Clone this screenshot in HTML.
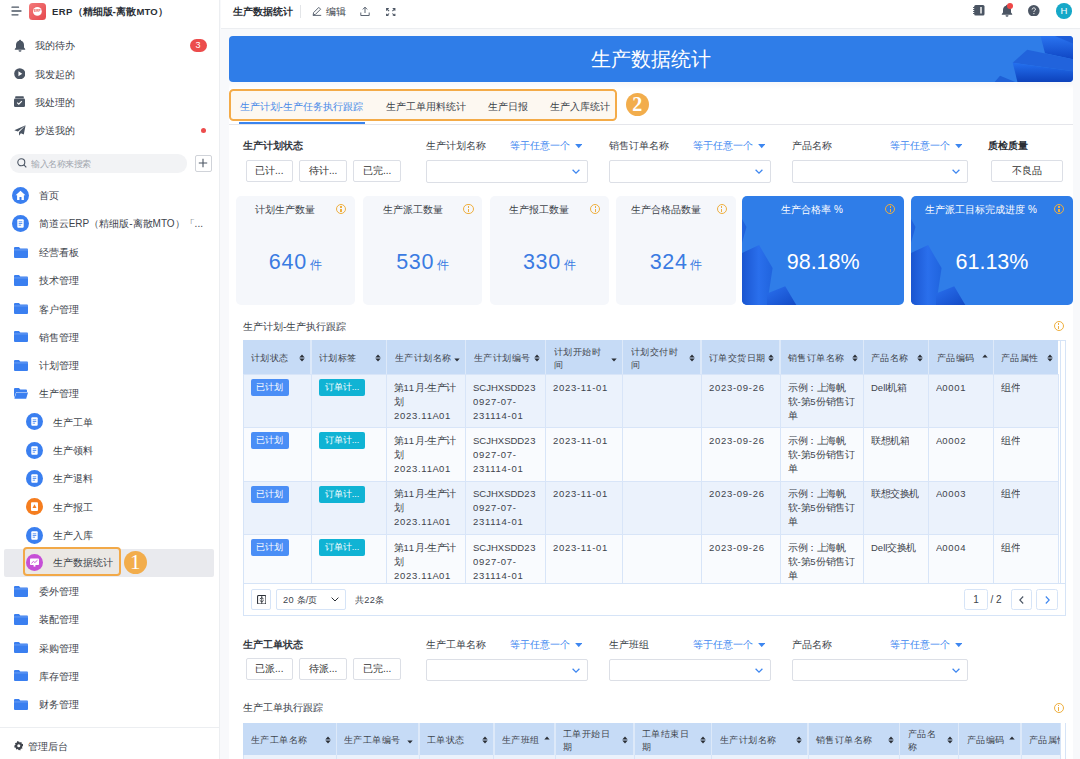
<!DOCTYPE html><html><head><meta charset="utf-8"><style>
*{box-sizing:border-box;margin:0;padding:0}
html,body{width:1080px;height:759px;overflow:hidden;background:#f8f9fb;font-family:"Liberation Sans",sans-serif;color:#333;font-size:10px;line-height:1}
.abs{position:absolute}
.t{position:absolute;white-space:nowrap;line-height:12px}
#sb{position:absolute;left:0;top:0;width:220px;height:759px;background:#fff;border-right:1px solid #eceef1}
.mi{position:absolute;left:0;width:220px;height:20px}
.mi .tx{position:absolute;left:35px;top:4px;font-size:10px;line-height:12px;color:#40444c;white-space:nowrap}
.fold{position:absolute;left:14px;top:5px;width:13.5px;height:11px}
.circ{position:absolute;width:17px;height:17px;border-radius:50%;background:#3a7ff0}
#top{position:absolute;left:221px;top:0;width:859px;height:28.5px;background:#fff;border-bottom:1px solid #eceef1}
.panel{position:absolute;background:#fff}
.btn{position:absolute;height:22px;border:1px solid #dcdfe6;border-radius:2px;background:#fff;font-size:10px;line-height:20px;color:#333;text-align:center}
.sel{position:absolute;height:22.5px;border:1px solid #dcdfe6;border-radius:2px;background:#fff}
.blue{color:#3d86f0}
.card{position:absolute;top:195.5px;height:109px;border-radius:5px;background:#f5f7fb}
.card .ct{position:absolute;top:205px;font-size:10px;line-height:10px;white-space:nowrap;color:#333}
table.tb{position:absolute;border-collapse:collapse;table-layout:fixed}
.tbx{background:#c6dbf6;font-weight:normal;text-align:left;color:#333;font-size:10px;line-height:14px;padding:0 0 0 8px;border-right:1.5px solid #e4edfa;position:relative;vertical-align:middle}
.tb td{font-size:10px;line-height:14.2px;color:#333;padding:5px 0 0 7.5px;vertical-align:top;border-right:1px solid #d8e5f8;border-top:1px solid #d8e5f8;white-space:nowrap;overflow:hidden}
.tb tr.o td{background:#ebf2fc}
.tb tr.e td{background:#f9fbfe}
.tag{display:inline-block;height:17px;line-height:17px;padding:0 4px;border-radius:2px;color:#fff;font-size:10px}
.srt{position:absolute;right:6px;top:50%;margin-top:-4px;width:6px;height:8px}
.info{position:absolute;width:10.5px;height:10.5px;border:1px solid #efaf3e;border-radius:50%}
.info:after{content:"";position:absolute;left:3.65px;top:3.9px;width:1.2px;height:3.6px;background:#efaf3e}
.info:before{content:"";position:absolute;left:3.65px;top:1.7px;width:1.2px;height:1.3px;background:#efaf3e}
</style></head><body>
<div id="sb">
<svg class="abs" style="left:11px;top:6px" width="11" height="10" viewBox="0 0 11 10"><g stroke="#4b5563" stroke-width="1.3" stroke-linecap="round"><line x1="1" y1="1.2" x2="7.5" y2="1.2"/><line x1="1" y1="5" x2="10" y2="5"/><line x1="1" y1="8.8" x2="7" y2="8.8"/></g></svg>
<div class="abs" style="left:29px;top:2.8px;width:17px;height:17px;border-radius:3.5px;background:linear-gradient(135deg,#f37a7a,#e5484d)"><svg class="abs" style="left:4.1px;top:4px" width="8.8" height="8.8" viewBox="0 0 8.8 8.8"><circle cx="4.4" cy="4.4" r="4.4" fill="#fff"/><text x="4.4" y="5.5" font-size="3.2" font-weight="bold" text-anchor="middle" fill="#e9575a" font-family="Liberation Sans">ERP</text></svg></div>
<div class="t" style="left:52px;top:5.8px;font-size:10px;font-weight:bold;color:#2b2f36"><span style="font-size:9.5px;letter-spacing:.35px">ERP</span>（精细版<span style="letter-spacing:.5px">-</span>离散<span style="font-size:9.5px;letter-spacing:.1px">MTO</span>）</div>
<svg class="abs" style="left:13.5px;top:38.8px" width="12" height="13" viewBox="0 0 12 13"><path d="M6 0.8c.6 0 1 .4 1 .9 1.9.5 3 2.1 3 4.2v2.6l1.2 1.4v.8H0.8v-.8L2 8.5V5.9c0-2.1 1.1-3.7 3-4.2 0-.5.4-.9 1-.9z" fill="#4b5563"/><path d="M4.5 11.3h3a1.5 1.5 0 0 1-3 0z" fill="#4b5563"/></svg>
<div class="t" style="left:35px;top:40.3px;color:#40444c">我的待办</div>
<div class="abs" style="left:189.5px;top:38.6px;width:17px;height:13.5px;border-radius:7px;background:#ec4c4c;color:#fff;font-size:9px;line-height:13.5px;text-align:center">3</div>
<svg class="abs" style="left:13.8px;top:67.7px" width="11.5" height="11.5" viewBox="0 0 12 12"><circle cx="6" cy="6" r="5.8" fill="#4b5563"/><path d="M4.6 3.4L8.6 6 4.6 8.6z" fill="#fff"/></svg>
<div class="t" style="left:35px;top:68.9px;color:#40444c">我发起的</div>
<svg class="abs" style="left:14px;top:96px" width="11" height="11" viewBox="0 0 11 11"><rect x="1.2" y="0.3" width="8.6" height="2" rx=".6" fill="#4b5563"/><rect x="0" y="2.6" width="11" height="8.4" rx="1.2" fill="#4b5563"/><path d="M3.2 6.6l1.6 1.5 3-3" stroke="#fff" stroke-width="1.2" fill="none"/></svg>
<div class="t" style="left:35px;top:96.9px;color:#40444c">我处理的</div>
<svg class="abs" style="left:13.5px;top:124.5px" width="12" height="11" viewBox="0 0 12 11"><path d="M11.6 0.2L0.3 5.2l3.6 1.3L11.6 0.2 5 7.3v3.5l1.9-2.6 2.9 1.3z" fill="#4b5563"/></svg>
<div class="t" style="left:35px;top:125.4px;color:#40444c">抄送我的</div>
<div class="abs" style="left:200.6px;top:127.8px;width:5.6px;height:5.6px;border-radius:50%;background:#ec4c4c"></div>
<div class="abs" style="left:9.8px;top:154.3px;width:177.5px;height:18.3px;border-radius:9px;background:#f2f3f5"></div>
<svg class="abs" style="left:17.3px;top:158.3px" width="10" height="10" viewBox="0 0 10 10"><circle cx="4.3" cy="4.3" r="3.5" stroke="#4b5563" stroke-width="1.1" fill="none"/><line x1="6.9" y1="6.9" x2="9.3" y2="9.3" stroke="#4b5563" stroke-width="1.1"/></svg>
<div class="t" style="left:30.5px;top:157.5px;font-size:9px;color:#a3a8b0;transform:scale(.945);transform-origin:0 50%">输入名称来搜索</div>
<div class="abs" style="left:194.5px;top:155px;width:17px;height:16.7px;border:1px solid #d0d3d9;border-radius:2px;background:#fff"></div>
<svg class="abs" style="left:198px;top:158.3px" width="10" height="10" viewBox="0 0 10 10"><path d="M5 0.8v8.4M0.8 5h8.4" stroke="#4b5563" stroke-width="1.1"/></svg>
<svg class="abs" style="left:12.2px;top:186.5px" width="17" height="17" viewBox="0 0 17 17"><circle cx="8.5" cy="8.5" r="8.5" fill="#3a7ff0"/><path d="M8.5 3.8L3.6 8.3h1.5v4.6h2.4V10h2v2.9h2.4V8.3h1.5z" fill="#fff"/></svg>
<div class="t" style="left:38.7px;top:189.9px;color:#40444c;">首页</div>
<svg class="abs" style="left:12.2px;top:215.0px" width="17" height="17" viewBox="0 0 17 17"><circle cx="8.5" cy="8.5" r="8.5" fill="#3a7ff0"/><rect x="5.3" y="4.3" width="6.4" height="8.4" rx="1" fill="#fff"/><path d="M6.7 6.8h3.6M6.7 8.5h3.6M6.7 10.2h2.4" stroke="#3a7ff0" stroke-width=".8"/></svg>
<div class="t" style="left:38.7px;top:218.4px;color:#40444c;">简道云ERP（精细版-离散MTO）「...</div>
<svg class="abs" style="left:13.9px;top:246.5px" width="14" height="11" viewBox="0 0 14 11"><path d="M0 1a1 1 0 0 1 1-1h4l1.3 1.5H13a1 1 0 0 1 1 1V10a1 1 0 0 1-1 1H1a1 1 0 0 1-1-1z" fill="#3a7ff0"/><rect x="0" y="2.6" width="14" height=".7" fill="#fff" opacity=".35"/></svg>
<div class="t" style="left:38.7px;top:246.9px;color:#40444c;">经营看板</div>
<svg class="abs" style="left:13.9px;top:274.8px" width="14" height="11" viewBox="0 0 14 11"><path d="M0 1a1 1 0 0 1 1-1h4l1.3 1.5H13a1 1 0 0 1 1 1V10a1 1 0 0 1-1 1H1a1 1 0 0 1-1-1z" fill="#3a7ff0"/><rect x="0" y="2.6" width="14" height=".7" fill="#fff" opacity=".35"/></svg>
<div class="t" style="left:38.7px;top:275.2px;color:#40444c;">技术管理</div>
<svg class="abs" style="left:13.9px;top:303.1px" width="14" height="11" viewBox="0 0 14 11"><path d="M0 1a1 1 0 0 1 1-1h4l1.3 1.5H13a1 1 0 0 1 1 1V10a1 1 0 0 1-1 1H1a1 1 0 0 1-1-1z" fill="#3a7ff0"/><rect x="0" y="2.6" width="14" height=".7" fill="#fff" opacity=".35"/></svg>
<div class="t" style="left:38.7px;top:303.5px;color:#40444c;">客户管理</div>
<svg class="abs" style="left:13.9px;top:331.4px" width="14" height="11" viewBox="0 0 14 11"><path d="M0 1a1 1 0 0 1 1-1h4l1.3 1.5H13a1 1 0 0 1 1 1V10a1 1 0 0 1-1 1H1a1 1 0 0 1-1-1z" fill="#3a7ff0"/><rect x="0" y="2.6" width="14" height=".7" fill="#fff" opacity=".35"/></svg>
<div class="t" style="left:38.7px;top:331.79999999999995px;color:#40444c;">销售管理</div>
<svg class="abs" style="left:13.9px;top:359.7px" width="14" height="11" viewBox="0 0 14 11"><path d="M0 1a1 1 0 0 1 1-1h4l1.3 1.5H13a1 1 0 0 1 1 1V10a1 1 0 0 1-1 1H1a1 1 0 0 1-1-1z" fill="#3a7ff0"/><rect x="0" y="2.6" width="14" height=".7" fill="#fff" opacity=".35"/></svg>
<div class="t" style="left:38.7px;top:360.09999999999997px;color:#40444c;">计划管理</div>
<svg class="abs" style="left:13.9px;top:388.0px" width="14" height="11" viewBox="0 0 14 11"><path d="M0 1a1 1 0 0 1 1-1h4l1.3 1.5H12a1 1 0 0 1 1 1V4H2.2L0 10z" fill="#3a7ff0"/><path d="M2.3 4.6H14l-1.8 6.2H0.4z" fill="#3a7ff0"/></svg>
<div class="t" style="left:38.7px;top:388.4px;color:#40444c;">生产管理</div>
<div class="abs" style="left:3.7px;top:548.9px;width:210.8px;height:27.8px;border-radius:2px;background:#e9eaee"></div>
<svg class="abs" style="left:26.1px;top:413.3px" width="17" height="17" viewBox="0 0 17 17"><circle cx="8.5" cy="8.5" r="8.5" fill="#3a7ff0"/><rect x="5.3" y="4.3" width="6.4" height="8.4" rx="1" fill="#fff"/><path d="M6.7 6.8h3.6M6.7 8.5h3.6M6.7 10.2h2.4" stroke="#3a7ff0" stroke-width=".8"/></svg>
<div class="t" style="left:52.6px;top:416.7px;color:#40444c;">生产工单</div>
<svg class="abs" style="left:26.1px;top:441.6px" width="17" height="17" viewBox="0 0 17 17"><circle cx="8.5" cy="8.5" r="8.5" fill="#3a7ff0"/><rect x="5.3" y="4.3" width="6.4" height="8.4" rx="1" fill="#fff"/><path d="M6.7 6.8h3.6M6.7 8.5h3.6M6.7 10.2h2.4" stroke="#3a7ff0" stroke-width=".8"/></svg>
<div class="t" style="left:52.6px;top:445.0px;color:#40444c;">生产领料</div>
<svg class="abs" style="left:26.1px;top:469.9px" width="17" height="17" viewBox="0 0 17 17"><circle cx="8.5" cy="8.5" r="8.5" fill="#3a7ff0"/><rect x="5.3" y="4.3" width="6.4" height="8.4" rx="1" fill="#fff"/><path d="M6.7 6.8h3.6M6.7 8.5h3.6M6.7 10.2h2.4" stroke="#3a7ff0" stroke-width=".8"/></svg>
<div class="t" style="left:52.6px;top:473.29999999999995px;color:#40444c;">生产退料</div>
<svg class="abs" style="left:26.1px;top:498.2px" width="17" height="17" viewBox="0 0 17 17"><circle cx="8.5" cy="8.5" r="8.5" fill="#f57d1f"/><rect x="5" y="4.3" width="7" height="8.6" rx="1" fill="#fff"/><path d="M8.5 6.3l2 3.7h-4z" fill="#f57d1f"/></svg>
<div class="t" style="left:52.6px;top:501.59999999999997px;color:#40444c;">生产报工</div>
<svg class="abs" style="left:26.1px;top:526.5px" width="17" height="17" viewBox="0 0 17 17"><circle cx="8.5" cy="8.5" r="8.5" fill="#3a7ff0"/><rect x="5.3" y="4.3" width="6.4" height="8.4" rx="1" fill="#fff"/><path d="M6.7 6.8h3.6M6.7 8.5h3.6M6.7 10.2h2.4" stroke="#3a7ff0" stroke-width=".8"/></svg>
<div class="t" style="left:52.6px;top:529.9px;color:#40444c;">生产入库</div>
<div class="abs" style="left:23px;top:546.7px;width:97.7px;height:29px;border:2px solid #f2a948;border-radius:4px;background:#ebe8e4"></div>
<svg class="abs" style="left:26.3px;top:553.5px" width="17" height="17" viewBox="0 0 17 17"><circle cx="8.5" cy="8.5" r="8.5" fill="#c64fd6"/><rect x="4" y="4.6" width="9" height="6.4" rx=".8" fill="#fff"/><path d="M5.4 9.3l2-1.8 1.5 1 2.6-2.3" stroke="#c64fd6" stroke-width=".9" fill="none"/><rect x="7.6" y="11" width="1.8" height="1.6" fill="#fff"/></svg>
<div class="t" style="left:52.6px;top:557.1px;color:#40444c;">生产数据统计</div>
<div class="abs" style="left:123.7px;top:551px;width:23px;height:23px;border-radius:50%;background:#f2ad4c;color:#fff;font-family:'Liberation Serif',serif;font-size:21px;line-height:23px;text-align:center">1</div>
<svg class="abs" style="left:13.9px;top:585.5px" width="14" height="11" viewBox="0 0 14 11"><path d="M0 1a1 1 0 0 1 1-1h4l1.3 1.5H13a1 1 0 0 1 1 1V10a1 1 0 0 1-1 1H1a1 1 0 0 1-1-1z" fill="#3a7ff0"/><rect x="0" y="2.6" width="14" height=".7" fill="#fff" opacity=".35"/></svg>
<div class="t" style="left:38.7px;top:585.9px;color:#40444c;">委外管理</div>
<svg class="abs" style="left:13.9px;top:613.8px" width="14" height="11" viewBox="0 0 14 11"><path d="M0 1a1 1 0 0 1 1-1h4l1.3 1.5H13a1 1 0 0 1 1 1V10a1 1 0 0 1-1 1H1a1 1 0 0 1-1-1z" fill="#3a7ff0"/><rect x="0" y="2.6" width="14" height=".7" fill="#fff" opacity=".35"/></svg>
<div class="t" style="left:38.7px;top:614.1999999999999px;color:#40444c;">装配管理</div>
<svg class="abs" style="left:13.9px;top:642.1px" width="14" height="11" viewBox="0 0 14 11"><path d="M0 1a1 1 0 0 1 1-1h4l1.3 1.5H13a1 1 0 0 1 1 1V10a1 1 0 0 1-1 1H1a1 1 0 0 1-1-1z" fill="#3a7ff0"/><rect x="0" y="2.6" width="14" height=".7" fill="#fff" opacity=".35"/></svg>
<div class="t" style="left:38.7px;top:642.5px;color:#40444c;">采购管理</div>
<svg class="abs" style="left:13.9px;top:670.4px" width="14" height="11" viewBox="0 0 14 11"><path d="M0 1a1 1 0 0 1 1-1h4l1.3 1.5H13a1 1 0 0 1 1 1V10a1 1 0 0 1-1 1H1a1 1 0 0 1-1-1z" fill="#3a7ff0"/><rect x="0" y="2.6" width="14" height=".7" fill="#fff" opacity=".35"/></svg>
<div class="t" style="left:38.7px;top:670.8px;color:#40444c;">库存管理</div>
<svg class="abs" style="left:13.9px;top:698.7px" width="14" height="11" viewBox="0 0 14 11"><path d="M0 1a1 1 0 0 1 1-1h4l1.3 1.5H13a1 1 0 0 1 1 1V10a1 1 0 0 1-1 1H1a1 1 0 0 1-1-1z" fill="#3a7ff0"/><rect x="0" y="2.6" width="14" height=".7" fill="#fff" opacity=".35"/></svg>
<div class="t" style="left:38.7px;top:699.1px;color:#40444c;">财务管理</div>
<div class="abs" style="left:0;top:727px;width:220px;height:1px;background:#eceef1"></div>
<svg class="abs" style="left:13.5px;top:741px" width="9.5" height="9.5" viewBox="0 0 10 10"><path d="M5 0l1 1.6 1.8-.5.3 1.8 1.8.5-.6 1.7L10 5l-1.6 1 .5 1.8-1.8.3-.5 1.8-1.7-.6L5 10 4 8.4l-1.8.5-.3-1.8-1.8-.5.6-1.7L0 5l1.6-1-.5-1.8 1.8-.3.5-1.8 1.7.6z" fill="#40444c"/><circle cx="5" cy="5" r="1.6" fill="#fff"/></svg>
<div class="t" style="left:27.5px;top:740.9px;color:#40444c;">管理后台</div>
</div>
<div id="top"></div>
<div class="t" style="left:233px;top:5.5px;font-weight:bold;color:#2b2f36">生产数据统计</div>
<div class="abs" style="left:299.5px;top:5px;width:1px;height:12.5px;background:#e3e5e8"></div>
<svg class="abs" style="left:311.5px;top:6px" width="10" height="10" viewBox="0 0 10 10"><path d="M1.2 8.8l.4-2.2L6.8 1.4l1.8 1.8-5.2 5.2z M0.8 9.4h8.4" stroke="#4b5563" stroke-width=".9" fill="none"/></svg>
<div class="t" style="left:325.8px;top:5.5px;color:#40444c">编辑</div>
<svg class="abs" style="left:360px;top:5.5px" width="10" height="10.5" viewBox="0 0 10 10.5"><path d="M5 7V1.2M2.8 3.4L5 1.2l2.2 2.2M0.8 6.5v3h8.4v-3" stroke="#4b5563" stroke-width=".9" fill="none"/></svg>
<svg class="abs" style="left:386px;top:7.6px" width="9.5" height="8.6" viewBox="0 0 9.5 8.6"><path d="M0.6 2.8V0.6h2.2M0.6 0.6l2.5 2.5M6.7 0.6h2.2v2.2M8.9 0.6L6.4 3.1M8.9 5.8V8h-2.2M8.9 8L6.4 5.5M2.8 8H0.6V5.8M0.6 8l2.5-2.5" stroke="#4b5563" stroke-width="1.05" fill="none"/></svg>
<svg class="abs" style="left:973px;top:5px" width="11.5" height="10.5" viewBox="0 0 11.5 10.5"><rect x="1.2" y="0" width="10.3" height="10.5" rx="1.5" fill="#4b5563"/><rect x="7.3" y="2" width="1.4" height="6.5" fill="#fff"/><path d="M0 2.5h2M0 4.5h2M0 6.5h2M0 8.5h2" stroke="#4b5563" stroke-width=".9"/></svg>
<svg class="abs" style="left:1000.5px;top:4.199999999999999px" width="12" height="13" viewBox="0 0 12 13"><path d="M6 0.8c.6 0 1 .4 1 .9 1.9.5 3 2.1 3 4.2v2.6l1.2 1.4v.8H0.8v-.8L2 8.5V5.9c0-2.1 1.1-3.7 3-4.2 0-.5.4-.9 1-.9z" fill="#4b5563"/><path d="M4.5 11.3h3a1.5 1.5 0 0 1-3 0z" fill="#4b5563"/></svg>
<div class="abs" style="left:1007.4px;top:2.7px;width:6px;height:6px;border-radius:50%;background:#ef4646"></div>
<svg class="abs" style="left:1028.2px;top:4.7px" width="11.6" height="11.6" viewBox="0 0 12 12"><circle cx="6" cy="6" r="6" fill="#4b5563"/><path d="M4.3 4.6c0-1 .8-1.6 1.7-1.6s1.7.6 1.7 1.5c0 1.2-1.6 1.2-1.6 2.6" stroke="#fff" stroke-width="1" fill="none"/><circle cx="6.1" cy="8.9" r=".65" fill="#fff"/></svg>
<div class="abs" style="left:1056px;top:3.1px;width:15.7px;height:15.7px;border-radius:50%;background:#16a8c8;color:#fff;font-size:9.5px;line-height:15.7px;text-align:center">H</div>
<div class="abs" style="left:228.5px;top:36px;width:844.7px;height:46.3px;border-radius:4px;background:#2f7de8;overflow:hidden"><svg class="abs" style="left:0;top:0" width="845" height="47" viewBox="0 0 845 47"><defs><linearGradient id="bg1" x1="0" y1="0" x2="0" y2="1"><stop offset="0" stop-color="#2a74f0"/><stop offset="1" stop-color="#0f46c4"/></linearGradient><linearGradient id="bg2" x1="0" y1="0" x2="0" y2="1"><stop offset="0" stop-color="#2470f0"/><stop offset="1" stop-color="#0c3fb8"/></linearGradient></defs><path d="M811.5 0H845V23.4L816 17.3z" fill="url(#bg1)"/><path d="M826 0H845V8z" fill="#1a58d2" opacity=".8"/><path d="M783.7 26.8L798.2 13.8 845 23.4V35.5z" fill="#2163dc"/><path d="M783.7 26.8L845 35.5V47H788.7z" fill="url(#bg2)"/><path d="M764.8 47L771 39.8 788.7 47z" fill="#1f60d6"/></svg><div class="t" style="left:0;width:844px;text-align:center;top:11px;font-size:19.6px;line-height:24px;color:#fff">生产数据统计</div></div>
<div class="panel" style="left:228.5px;top:83px;width:844.7px;height:42px;background:linear-gradient(#f8f8fa,#fff 6px)"></div>
<div class="abs" style="left:228.5px;top:124px;width:844.7px;height:1px;background:#e5e6eb"></div>
<div class="abs" style="left:229px;top:88.5px;width:387.6px;height:32.4px;border:2px solid #f4ab48;border-radius:4.5px;background:#fdf8f1"></div>
<div class="t" style="left:239.5px;top:101px;color:#4a8ae8">生产计划-生产任务执行跟踪</div>
<div class="t" style="left:386.4px;top:101px;color:#40444c">生产工单用料统计</div>
<div class="t" style="left:488.3px;top:101px;color:#40444c">生产日报</div>
<div class="t" style="left:550.2px;top:101px;color:#40444c">生产入库统计</div>
<div class="abs" style="left:239.3px;top:122px;width:125.6px;height:2px;background:#3a84ee"></div>
<div class="abs" style="left:625.6px;top:92.6px;width:23.3px;height:23.3px;border-radius:50%;background:#f2ad4c;color:#fff;font-family:'Liberation Serif',serif;font-weight:bold;font-size:20px;line-height:23.3px;text-align:center">2</div>
<div class="panel" style="left:228.5px;top:125px;width:844.7px;height:640px"></div>
<div class="t" style="left:243px;top:140px;font-weight:bold;color:#33373e">生产计划状态</div>
<div class="btn" style="left:245.5px;top:159.7px;width:47.5px">已计...</div>
<div class="btn" style="left:299.3px;top:159.7px;width:47.5px">待计...</div>
<div class="btn" style="left:353.3px;top:159.7px;width:47.5px">已完...</div>
<div class="t" style="left:426px;top:140px;color:#40444c">生产计划名称</div>
<div class="t blue" style="left:509.8px;top:140px">等于任意一个</div>
<svg class="abs" style="left:574.8px;top:144px" width="7.5" height="4.5" viewBox="0 0 8 5"><path d="M0 0h8L4 4.6z" fill="#3d86f0"/></svg>
<div class="sel" style="left:426px;top:160.2px;width:161.6px"></div>
<svg class="abs" style="left:571.6px;top:169px" width="8" height="5" viewBox="0 0 8 5"><path d="M0.6 0.7L4 4.1l3.4-3.4" stroke="#3d86f0" stroke-width="1.25" fill="none"/></svg>
<div class="t" style="left:609px;top:140px;color:#40444c">销售订单名称</div>
<div class="t blue" style="left:692.6px;top:140px">等于任意一个</div>
<svg class="abs" style="left:757.6px;top:144px" width="7.5" height="4.5" viewBox="0 0 8 5"><path d="M0 0h8L4 4.6z" fill="#3d86f0"/></svg>
<div class="sel" style="left:609px;top:160.2px;width:161.6px"></div>
<svg class="abs" style="left:754.6px;top:169px" width="8" height="5" viewBox="0 0 8 5"><path d="M0.6 0.7L4 4.1l3.4-3.4" stroke="#3d86f0" stroke-width="1.25" fill="none"/></svg>
<div class="t" style="left:792px;top:140px;color:#40444c">产品名称</div>
<div class="t blue" style="left:889.6px;top:140px">等于任意一个</div>
<svg class="abs" style="left:954.6px;top:144px" width="7.5" height="4.5" viewBox="0 0 8 5"><path d="M0 0h8L4 4.6z" fill="#3d86f0"/></svg>
<div class="sel" style="left:792px;top:160.2px;width:176.2px"></div>
<svg class="abs" style="left:952.2px;top:169px" width="8" height="5" viewBox="0 0 8 5"><path d="M0.6 0.7L4 4.1l3.4-3.4" stroke="#3d86f0" stroke-width="1.25" fill="none"/></svg>
<div class="t" style="left:988.4px;top:140px;font-weight:bold;color:#2b2f36">质检质量</div>
<div class="btn" style="left:991px;top:160px;width:71.5px">不良品</div>
<div class="card" style="left:235.5px;width:119.5px"></div>
<div class="t" style="left:235.5px;width:99.5px;text-align:center;top:204px;color:#40444c">计划生产数量</div>
<div class="info" style="left:335.8px;top:203.8px"></div>
<div class="t" style="left:235.5px;width:119.5px;text-align:center;top:249.5px;line-height:24px;color:#3a7be2"><span style="font-size:21.5px;letter-spacing:.7px">640</span> <span style="font-size:12px">件</span></div>
<div class="card" style="left:362.8px;width:119.5px"></div>
<div class="t" style="left:362.8px;width:99.5px;text-align:center;top:204px;color:#40444c">生产派工数量</div>
<div class="info" style="left:463.1px;top:203.8px"></div>
<div class="t" style="left:362.8px;width:119.5px;text-align:center;top:249.5px;line-height:24px;color:#3a7be2"><span style="font-size:21.5px;letter-spacing:.7px">530</span> <span style="font-size:12px">件</span></div>
<div class="card" style="left:489.6px;width:119.5px"></div>
<div class="t" style="left:489.6px;width:99.5px;text-align:center;top:204px;color:#40444c">生产报工数量</div>
<div class="info" style="left:589.9px;top:203.8px"></div>
<div class="t" style="left:489.6px;width:119.5px;text-align:center;top:249.5px;line-height:24px;color:#3a7be2"><span style="font-size:21.5px;letter-spacing:.7px">330</span> <span style="font-size:12px">件</span></div>
<div class="card" style="left:616.3px;width:119.5px"></div>
<div class="t" style="left:616.3px;width:99.5px;text-align:center;top:204px;color:#40444c">生产合格品数量</div>
<div class="info" style="left:716.5999999999999px;top:203.8px"></div>
<div class="t" style="left:616.3px;width:119.5px;text-align:center;top:249.5px;line-height:24px;color:#3a7be2"><span style="font-size:21.5px;letter-spacing:.7px">324</span> <span style="font-size:12px">件</span></div>
<div class="card" style="left:742.4px;width:161.6px;background:#2f7de8;overflow:hidden"><svg class="abs" style="left:0;top:0" width="162" height="109" viewBox="0 0 162 109"><defs><linearGradient id="cg1" x1="0" y1="0" x2="1" y2="0"><stop offset="0" stop-color="#1a55d0"/><stop offset=".55" stop-color="#2a6fec"/><stop offset="1" stop-color="#2064de"/></linearGradient><linearGradient id="cg2" x1="0" y1="0" x2="1" y2="1"><stop offset="0" stop-color="#2a70ee"/><stop offset="1" stop-color="#134bc6"/></linearGradient></defs><path d="M0 23L4.5 31 0 46.7z" fill="#2163dc"/><path d="M0 57L17.1 49.1 30.6 72 25 109H0z" fill="url(#cg1)"/><path d="M25 97.4L43.2 90.2 54.3 109H25z" fill="url(#cg2)"/></svg></div>
<div class="t" style="left:742.4px;width:139.6px;text-align:center;top:204px;color:#fff">生产合格率 %</div>
<div class="info" style="left:884.9px;top:203.8px"></div>
<div class="t" style="left:742.4px;width:161.6px;text-align:center;top:249.5px;line-height:24px;color:#fff;font-size:21.5px">98.18%</div>
<div class="card" style="left:911.2px;width:161.6px;background:#2f7de8;overflow:hidden"><svg class="abs" style="left:0;top:0" width="162" height="109" viewBox="0 0 162 109"><defs><linearGradient id="cg1" x1="0" y1="0" x2="1" y2="0"><stop offset="0" stop-color="#1a55d0"/><stop offset=".55" stop-color="#2a6fec"/><stop offset="1" stop-color="#2064de"/></linearGradient><linearGradient id="cg2" x1="0" y1="0" x2="1" y2="1"><stop offset="0" stop-color="#2a70ee"/><stop offset="1" stop-color="#134bc6"/></linearGradient></defs><path d="M0 23L4.5 31 0 46.7z" fill="#2163dc"/><path d="M0 57L17.1 49.1 30.6 72 25 109H0z" fill="url(#cg1)"/><path d="M25 97.4L43.2 90.2 54.3 109H25z" fill="url(#cg2)"/></svg></div>
<div class="t" style="left:911.2px;width:139.6px;text-align:center;top:204px;color:#fff">生产派工目标完成进度 %</div>
<div class="info" style="left:1053.7px;top:203.8px"></div>
<div class="t" style="left:911.2px;width:161.6px;text-align:center;top:249.5px;line-height:24px;color:#fff;font-size:21.5px">61.13%</div>
<div class="t" style="left:243px;top:320.5px;color:#40444c">生产计划-生产执行跟踪</div>
<div class="info" style="left:1053.5px;top:320.8px"></div>
<div class="abs" style="left:242.9px;top:340.1px;width:823.4999999999999px;height:275.5px;border:1px solid #d6e4f7;background:#fff"></div>
<div class="abs" style="left:242.9px;top:340.1px;width:815.4px;height:33.7px;background:#dde9f9"></div>
<div class="abs" style="left:243px;top:340.1px;width:67.3px;height:33.7px;background:#c6dbf6"></div>
<div class="t" style="left:251px;top:352.25000000000006px;color:#40444c;transform:scale(.94);transform-origin:0 50%">计划状态</div>
<svg class="abs" style="left:299.4px;top:353.75px" width="6" height="8.2" viewBox="0 0 6 8.2"><path d="M0.3 3.6L3 0.6l2.7 3z" fill="#2b2f36"/><path d="M0.3 4.6h5.4L3 7.6z" fill="#2b2f36"/></svg>
<div class="abs" style="left:311.7px;top:340.1px;width:74.29999999999998px;height:33.7px;background:#c6dbf6"></div>
<div class="t" style="left:319px;top:352.25000000000006px;color:#40444c;transform:scale(.94);transform-origin:0 50%">计划标签</div>
<svg class="abs" style="left:375.09999999999997px;top:353.75px" width="6" height="8.2" viewBox="0 0 6 8.2"><path d="M0.3 3.6L3 0.6l2.7 3z" fill="#2b2f36"/><path d="M0.3 4.6h5.4L3 7.6z" fill="#2b2f36"/></svg>
<div class="abs" style="left:387.4px;top:340.1px;width:77.50000000000003px;height:33.7px;background:#c6dbf6"></div>
<div class="t" style="left:394.7px;top:352.25000000000006px;color:#40444c;transform:scale(.94);transform-origin:0 50%">生产计划名称</div>
<svg class="abs" style="left:454.0px;top:353.75px" width="6" height="8.2" viewBox="0 0 6 8.2"><path d="M0.3 4.6h5.4L3 7.6z" fill="#2b2f36"/></svg>
<div class="abs" style="left:466.3px;top:340.1px;width:78.49999999999997px;height:33.7px;background:#c6dbf6"></div>
<div class="t" style="left:473.6px;top:352.25000000000006px;color:#40444c;transform:scale(.94);transform-origin:0 50%">生产计划编号</div>
<svg class="abs" style="left:533.9px;top:353.75px" width="6" height="8.2" viewBox="0 0 6 8.2"><path d="M0.3 3.6L3 0.6l2.7 3z" fill="#2b2f36"/><path d="M0.3 4.6h5.4L3 7.6z" fill="#2b2f36"/></svg>
<div class="abs" style="left:546.2px;top:340.1px;width:75.6px;height:33.7px;background:#c6dbf6"></div>
<div class="t" style="left:553.5px;top:345.15000000000003px;color:#40444c;line-height:14.4px;transform:scale(.94);transform-origin:0 50%">计划开始时<br>间</div>
<svg class="abs" style="left:610.9px;top:353.75px" width="6" height="8.2" viewBox="0 0 6 8.2"><path d="M0.3 4.6h5.4L3 7.6z" fill="#2b2f36"/></svg>
<div class="abs" style="left:623.2px;top:340.1px;width:77.1px;height:33.7px;background:#c6dbf6"></div>
<div class="t" style="left:630.5px;top:345.15000000000003px;color:#40444c;line-height:14.4px;transform:scale(.94);transform-origin:0 50%">计划交付时<br>间</div>
<svg class="abs" style="left:689.4px;top:353.75px" width="6" height="8.2" viewBox="0 0 6 8.2"><path d="M0.3 3.6L3 0.6l2.7 3z" fill="#2b2f36"/><path d="M0.3 4.6h5.4L3 7.6z" fill="#2b2f36"/></svg>
<div class="abs" style="left:701.7px;top:340.1px;width:77.6px;height:33.7px;background:#c6dbf6"></div>
<div class="t" style="left:709px;top:352.25000000000006px;color:#40444c;transform:scale(.94);transform-origin:0 50%">订单交货日期</div>
<svg class="abs" style="left:768.4px;top:353.75px" width="6" height="8.2" viewBox="0 0 6 8.2"><path d="M0.3 3.6L3 0.6l2.7 3z" fill="#2b2f36"/><path d="M0.3 4.6h5.4L3 7.6z" fill="#2b2f36"/></svg>
<div class="abs" style="left:780.7px;top:340.1px;width:81.89999999999995px;height:33.7px;background:#c6dbf6"></div>
<div class="t" style="left:788px;top:352.25000000000006px;color:#40444c;transform:scale(.94);transform-origin:0 50%">销售订单名称</div>
<svg class="abs" style="left:851.6999999999999px;top:353.75px" width="6" height="8.2" viewBox="0 0 6 8.2"><path d="M0.3 3.6L3 0.6l2.7 3z" fill="#2b2f36"/><path d="M0.3 4.6h5.4L3 7.6z" fill="#2b2f36"/></svg>
<div class="abs" style="left:864.0px;top:340.1px;width:63.90000000000007px;height:33.7px;background:#c6dbf6"></div>
<div class="t" style="left:871.3px;top:352.25000000000006px;color:#40444c;transform:scale(.94);transform-origin:0 50%">产品名称</div>
<svg class="abs" style="left:917.0px;top:353.75px" width="6" height="8.2" viewBox="0 0 6 8.2"><path d="M0.3 3.6L3 0.6l2.7 3z" fill="#2b2f36"/><path d="M0.3 4.6h5.4L3 7.6z" fill="#2b2f36"/></svg>
<div class="abs" style="left:929.3000000000001px;top:340.1px;width:63.29999999999993px;height:33.7px;background:#c6dbf6"></div>
<div class="t" style="left:936.6px;top:352.25000000000006px;color:#40444c;transform:scale(.94);transform-origin:0 50%">产品编码</div>
<svg class="abs" style="left:981.6999999999999px;top:353.75px" width="6" height="8.2" viewBox="0 0 6 8.2"><path d="M0.3 3.6L3 0.6l2.7 3z" fill="#2b2f36"/></svg>
<div class="abs" style="left:994.0px;top:340.1px;width:63.6px;height:33.7px;background:#c6dbf6"></div>
<div class="t" style="left:1001.3px;top:352.25000000000006px;color:#40444c;transform:scale(.94);transform-origin:0 50%">产品属性</div>
<svg class="abs" style="left:1046.7px;top:353.75px" width="6" height="8.2" viewBox="0 0 6 8.2"><path d="M0.3 3.6L3 0.6l2.7 3z" fill="#2b2f36"/><path d="M0.3 4.6h5.4L3 7.6z" fill="#2b2f36"/></svg>
<div class="abs" style="left:1059.6px;top:340.1px;width:1px;height:242.60000000000002px;background:#d6e4f7"></div>
<div class="abs" style="left:243.9px;top:374px;width:814.4px;height:53.30000000000001px;background:#ebf2fc;border-top:1px solid #d8e5f8"></div>
<div class="abs" style="left:250.8px;top:379px;width:38.2px;height:17px;border-radius:2px;background:#4a8ef6;color:#fff;font-size:9px;line-height:17px;text-align:center;white-space:nowrap">已计划</div>
<div class="abs" style="left:310.5px;top:374px;width:1px;height:53.30000000000001px;background:#d8e5f8"></div>
<div class="abs" style="left:318.8px;top:379px;width:46.5px;height:17px;border-radius:2px;background:#10b3d4;color:#fff;font-size:9px;line-height:17px;text-align:center;white-space:nowrap">订单计...</div>
<div class="abs" style="left:386.2px;top:374px;width:1px;height:53.30000000000001px;background:#d8e5f8"></div>
<div class="t" style="left:394.2px;top:380.8px;line-height:14.9px;color:#40444c;transform:scale(.95);transform-origin:0 0">第<span style="letter-spacing:.75px">11</span>月-生产计<br>划<br><span style="letter-spacing:.75px">2023.11</span>A<span style="letter-spacing:.75px">01</span></div>
<div class="abs" style="left:465.1px;top:374px;width:1px;height:53.30000000000001px;background:#d8e5f8"></div>
<div class="t" style="left:473.1px;top:380.8px;line-height:14.9px;color:#40444c;transform:scale(.95);transform-origin:0 0">SCJHXSDD<span style="letter-spacing:.75px">23</span><br><span style="letter-spacing:.75px">0927-07-</span><br><span style="letter-spacing:.75px">231114-01</span></div>
<div class="abs" style="left:545.0px;top:374px;width:1px;height:53.30000000000001px;background:#d8e5f8"></div>
<div class="t" style="left:553.0px;top:380.8px;line-height:14.9px;color:#40444c;transform:scale(.95);transform-origin:0 0"><span style="letter-spacing:.75px">2023-11-01</span></div>
<div class="abs" style="left:622.0px;top:374px;width:1px;height:53.30000000000001px;background:#d8e5f8"></div>
<div class="abs" style="left:700.5px;top:374px;width:1px;height:53.30000000000001px;background:#d8e5f8"></div>
<div class="t" style="left:708.5px;top:380.8px;line-height:14.9px;color:#40444c;transform:scale(.95);transform-origin:0 0"><span style="letter-spacing:.75px">2023-09-26</span></div>
<div class="abs" style="left:779.5px;top:374px;width:1px;height:53.30000000000001px;background:#d8e5f8"></div>
<div class="t" style="left:787.5px;top:380.8px;line-height:14.9px;color:#40444c;transform:scale(.95);transform-origin:0 0">示例：上海帆<br>软-第<span style="letter-spacing:.75px">5</span>份销售订<br>单</div>
<div class="abs" style="left:862.8px;top:374px;width:1px;height:53.30000000000001px;background:#d8e5f8"></div>
<div class="t" style="left:870.8px;top:380.8px;line-height:14.9px;color:#40444c;transform:scale(.95);transform-origin:0 0">Dell机箱</div>
<div class="abs" style="left:928.1px;top:374px;width:1px;height:53.30000000000001px;background:#d8e5f8"></div>
<div class="t" style="left:936.1px;top:380.8px;line-height:14.9px;color:#40444c;transform:scale(.95);transform-origin:0 0">A<span style="letter-spacing:.75px">0001</span></div>
<div class="abs" style="left:992.8px;top:374px;width:1px;height:53.30000000000001px;background:#d8e5f8"></div>
<div class="t" style="left:1000.8px;top:380.8px;line-height:14.9px;color:#40444c;transform:scale(.95);transform-origin:0 0">组件</div>
<div class="abs" style="left:243.9px;top:427.3px;width:814.4px;height:53.30000000000001px;background:#f9fbfe;border-top:1px solid #d8e5f8"></div>
<div class="abs" style="left:250.8px;top:432.3px;width:38.2px;height:17px;border-radius:2px;background:#4a8ef6;color:#fff;font-size:9px;line-height:17px;text-align:center;white-space:nowrap">已计划</div>
<div class="abs" style="left:310.5px;top:427.3px;width:1px;height:53.30000000000001px;background:#d8e5f8"></div>
<div class="abs" style="left:318.8px;top:432.3px;width:46.5px;height:17px;border-radius:2px;background:#10b3d4;color:#fff;font-size:9px;line-height:17px;text-align:center;white-space:nowrap">订单计...</div>
<div class="abs" style="left:386.2px;top:427.3px;width:1px;height:53.30000000000001px;background:#d8e5f8"></div>
<div class="t" style="left:394.2px;top:434.1px;line-height:14.9px;color:#40444c;transform:scale(.95);transform-origin:0 0">第<span style="letter-spacing:.75px">11</span>月-生产计<br>划<br><span style="letter-spacing:.75px">2023.11</span>A<span style="letter-spacing:.75px">01</span></div>
<div class="abs" style="left:465.1px;top:427.3px;width:1px;height:53.30000000000001px;background:#d8e5f8"></div>
<div class="t" style="left:473.1px;top:434.1px;line-height:14.9px;color:#40444c;transform:scale(.95);transform-origin:0 0">SCJHXSDD<span style="letter-spacing:.75px">23</span><br><span style="letter-spacing:.75px">0927-07-</span><br><span style="letter-spacing:.75px">231114-01</span></div>
<div class="abs" style="left:545.0px;top:427.3px;width:1px;height:53.30000000000001px;background:#d8e5f8"></div>
<div class="t" style="left:553.0px;top:434.1px;line-height:14.9px;color:#40444c;transform:scale(.95);transform-origin:0 0"><span style="letter-spacing:.75px">2023-11-01</span></div>
<div class="abs" style="left:622.0px;top:427.3px;width:1px;height:53.30000000000001px;background:#d8e5f8"></div>
<div class="abs" style="left:700.5px;top:427.3px;width:1px;height:53.30000000000001px;background:#d8e5f8"></div>
<div class="t" style="left:708.5px;top:434.1px;line-height:14.9px;color:#40444c;transform:scale(.95);transform-origin:0 0"><span style="letter-spacing:.75px">2023-09-26</span></div>
<div class="abs" style="left:779.5px;top:427.3px;width:1px;height:53.30000000000001px;background:#d8e5f8"></div>
<div class="t" style="left:787.5px;top:434.1px;line-height:14.9px;color:#40444c;transform:scale(.95);transform-origin:0 0">示例：上海帆<br>软-第<span style="letter-spacing:.75px">5</span>份销售订<br>单</div>
<div class="abs" style="left:862.8px;top:427.3px;width:1px;height:53.30000000000001px;background:#d8e5f8"></div>
<div class="t" style="left:870.8px;top:434.1px;line-height:14.9px;color:#40444c;transform:scale(.95);transform-origin:0 0">联想机箱</div>
<div class="abs" style="left:928.1px;top:427.3px;width:1px;height:53.30000000000001px;background:#d8e5f8"></div>
<div class="t" style="left:936.1px;top:434.1px;line-height:14.9px;color:#40444c;transform:scale(.95);transform-origin:0 0">A<span style="letter-spacing:.75px">0002</span></div>
<div class="abs" style="left:992.8px;top:427.3px;width:1px;height:53.30000000000001px;background:#d8e5f8"></div>
<div class="t" style="left:1000.8px;top:434.1px;line-height:14.9px;color:#40444c;transform:scale(.95);transform-origin:0 0">组件</div>
<div class="abs" style="left:243.9px;top:480.6px;width:814.4px;height:53.5px;background:#ebf2fc;border-top:1px solid #d8e5f8"></div>
<div class="abs" style="left:250.8px;top:485.6px;width:38.2px;height:17px;border-radius:2px;background:#4a8ef6;color:#fff;font-size:9px;line-height:17px;text-align:center;white-space:nowrap">已计划</div>
<div class="abs" style="left:310.5px;top:480.6px;width:1px;height:53.5px;background:#d8e5f8"></div>
<div class="abs" style="left:318.8px;top:485.6px;width:46.5px;height:17px;border-radius:2px;background:#10b3d4;color:#fff;font-size:9px;line-height:17px;text-align:center;white-space:nowrap">订单计...</div>
<div class="abs" style="left:386.2px;top:480.6px;width:1px;height:53.5px;background:#d8e5f8"></div>
<div class="t" style="left:394.2px;top:487.40000000000003px;line-height:14.9px;color:#40444c;transform:scale(.95);transform-origin:0 0">第<span style="letter-spacing:.75px">11</span>月-生产计<br>划<br><span style="letter-spacing:.75px">2023.11</span>A<span style="letter-spacing:.75px">01</span></div>
<div class="abs" style="left:465.1px;top:480.6px;width:1px;height:53.5px;background:#d8e5f8"></div>
<div class="t" style="left:473.1px;top:487.40000000000003px;line-height:14.9px;color:#40444c;transform:scale(.95);transform-origin:0 0">SCJHXSDD<span style="letter-spacing:.75px">23</span><br><span style="letter-spacing:.75px">0927-07-</span><br><span style="letter-spacing:.75px">231114-01</span></div>
<div class="abs" style="left:545.0px;top:480.6px;width:1px;height:53.5px;background:#d8e5f8"></div>
<div class="t" style="left:553.0px;top:487.40000000000003px;line-height:14.9px;color:#40444c;transform:scale(.95);transform-origin:0 0"><span style="letter-spacing:.75px">2023-11-01</span></div>
<div class="abs" style="left:622.0px;top:480.6px;width:1px;height:53.5px;background:#d8e5f8"></div>
<div class="abs" style="left:700.5px;top:480.6px;width:1px;height:53.5px;background:#d8e5f8"></div>
<div class="t" style="left:708.5px;top:487.40000000000003px;line-height:14.9px;color:#40444c;transform:scale(.95);transform-origin:0 0"><span style="letter-spacing:.75px">2023-09-26</span></div>
<div class="abs" style="left:779.5px;top:480.6px;width:1px;height:53.5px;background:#d8e5f8"></div>
<div class="t" style="left:787.5px;top:487.40000000000003px;line-height:14.9px;color:#40444c;transform:scale(.95);transform-origin:0 0">示例：上海帆<br>软-第<span style="letter-spacing:.75px">5</span>份销售订<br>单</div>
<div class="abs" style="left:862.8px;top:480.6px;width:1px;height:53.5px;background:#d8e5f8"></div>
<div class="t" style="left:870.8px;top:487.40000000000003px;line-height:14.9px;color:#40444c;transform:scale(.95);transform-origin:0 0">联想交换机</div>
<div class="abs" style="left:928.1px;top:480.6px;width:1px;height:53.5px;background:#d8e5f8"></div>
<div class="t" style="left:936.1px;top:487.40000000000003px;line-height:14.9px;color:#40444c;transform:scale(.95);transform-origin:0 0">A<span style="letter-spacing:.75px">0003</span></div>
<div class="abs" style="left:992.8px;top:480.6px;width:1px;height:53.5px;background:#d8e5f8"></div>
<div class="t" style="left:1000.8px;top:487.40000000000003px;line-height:14.9px;color:#40444c;transform:scale(.95);transform-origin:0 0">组件</div>
<div class="abs" style="left:243.9px;top:534.1px;width:814.4px;height:48.60000000000002px;background:#f9fbfe;border-top:1px solid #d8e5f8"></div>
<div class="abs" style="left:250.8px;top:539.1px;width:38.2px;height:17px;border-radius:2px;background:#4a8ef6;color:#fff;font-size:9px;line-height:17px;text-align:center;white-space:nowrap">已计划</div>
<div class="abs" style="left:310.5px;top:534.1px;width:1px;height:48.60000000000002px;background:#d8e5f8"></div>
<div class="abs" style="left:318.8px;top:539.1px;width:46.5px;height:17px;border-radius:2px;background:#10b3d4;color:#fff;font-size:9px;line-height:17px;text-align:center;white-space:nowrap">订单计...</div>
<div class="abs" style="left:386.2px;top:534.1px;width:1px;height:48.60000000000002px;background:#d8e5f8"></div>
<div class="t" style="left:394.2px;top:540.9px;line-height:14.9px;color:#40444c;transform:scale(.95);transform-origin:0 0">第<span style="letter-spacing:.75px">11</span>月-生产计<br>划<br><span style="letter-spacing:.75px">2023.11</span>A<span style="letter-spacing:.75px">01</span></div>
<div class="abs" style="left:465.1px;top:534.1px;width:1px;height:48.60000000000002px;background:#d8e5f8"></div>
<div class="t" style="left:473.1px;top:540.9px;line-height:14.9px;color:#40444c;transform:scale(.95);transform-origin:0 0">SCJHXSDD<span style="letter-spacing:.75px">23</span><br><span style="letter-spacing:.75px">0927-07-</span><br><span style="letter-spacing:.75px">231114-01</span></div>
<div class="abs" style="left:545.0px;top:534.1px;width:1px;height:48.60000000000002px;background:#d8e5f8"></div>
<div class="t" style="left:553.0px;top:540.9px;line-height:14.9px;color:#40444c;transform:scale(.95);transform-origin:0 0"><span style="letter-spacing:.75px">2023-11-01</span></div>
<div class="abs" style="left:622.0px;top:534.1px;width:1px;height:48.60000000000002px;background:#d8e5f8"></div>
<div class="abs" style="left:700.5px;top:534.1px;width:1px;height:48.60000000000002px;background:#d8e5f8"></div>
<div class="t" style="left:708.5px;top:540.9px;line-height:14.9px;color:#40444c;transform:scale(.95);transform-origin:0 0"><span style="letter-spacing:.75px">2023-09-26</span></div>
<div class="abs" style="left:779.5px;top:534.1px;width:1px;height:48.60000000000002px;background:#d8e5f8"></div>
<div class="t" style="left:787.5px;top:540.9px;line-height:14.9px;color:#40444c;transform:scale(.95);transform-origin:0 0">示例：上海帆<br>软-第<span style="letter-spacing:.75px">5</span>份销售订<br>单</div>
<div class="abs" style="left:862.8px;top:534.1px;width:1px;height:48.60000000000002px;background:#d8e5f8"></div>
<div class="t" style="left:870.8px;top:540.9px;line-height:14.9px;color:#40444c;transform:scale(.95);transform-origin:0 0">Dell交换机</div>
<div class="abs" style="left:928.1px;top:534.1px;width:1px;height:48.60000000000002px;background:#d8e5f8"></div>
<div class="t" style="left:936.1px;top:540.9px;line-height:14.9px;color:#40444c;transform:scale(.95);transform-origin:0 0">A<span style="letter-spacing:.75px">0004</span></div>
<div class="abs" style="left:992.8px;top:534.1px;width:1px;height:48.60000000000002px;background:#d8e5f8"></div>
<div class="t" style="left:1000.8px;top:540.9px;line-height:14.9px;color:#40444c;transform:scale(.95);transform-origin:0 0">组件</div>
<div class="abs" style="left:1057.8px;top:374px;width:1px;height:53.30000000000001px;background:#d8e5f8"></div>
<div class="abs" style="left:1057.8px;top:427.3px;width:1px;height:53.30000000000001px;background:#d8e5f8"></div>
<div class="abs" style="left:1057.8px;top:480.6px;width:1px;height:53.5px;background:#d8e5f8"></div>
<div class="abs" style="left:1057.8px;top:534.1px;width:1px;height:48.60000000000002px;background:#d8e5f8"></div>
<div class="abs" style="left:242.9px;top:582.7px;width:823px;height:1px;background:#d6e4f7"></div>
<div class="abs" style="left:251.3px;top:589.2px;width:20.2px;height:20.5px;border:1px solid #d6e4f7;border-radius:2px;background:#fff"></div>
<svg class="abs" style="left:256.8px;top:594.8px" width="9.5" height="9.5" viewBox="0 0 10 10"><rect x=".6" y=".6" width="8.8" height="8.8" rx="1" stroke="#2b2f36" stroke-width="1.1" fill="none"/><path d="M5 .6v8.8M3 4.2L5 2.8 7 4.2M3 5.8L5 7.2 7 5.8" stroke="#2b2f36" stroke-width=".9" fill="none"/></svg>
<div class="abs" style="left:276.4px;top:589.2px;width:69.3px;height:20.5px;border:1px solid #d6e4f7;border-radius:2px;background:#fff"></div>
<div class="t" style="left:282.5px;top:594.2px;color:#40444c;transform:scale(.92);transform-origin:0 50%"><span style="letter-spacing:.4px">20</span> 条/页</div>
<svg class="abs" style="left:331px;top:596.5px" width="8" height="5" viewBox="0 0 8 5"><path d="M0.6 0.6L4 4l3.4-3.4" stroke="#2b2f36" stroke-width="1" fill="none"/></svg>
<div class="t" style="left:355px;top:594.2px;color:#40444c;transform:scale(.92);transform-origin:0 50%">共<span style="letter-spacing:.5px">22</span>条</div>
<div class="abs" style="left:964.2px;top:588.6px;width:23.6px;height:21.7px;border:1px solid #d6e4f7;border-radius:2.5px;background:#fff;font-size:10px;line-height:20px;text-align:center;color:#40444c">1</div>
<div class="t" style="left:990.5px;top:593.5px;color:#40444c">/ 2</div>
<div class="abs" style="left:1010.5px;top:588.6px;width:21.7px;height:21.7px;border:1px solid #d6e4f7;border-radius:2.5px;background:#fff"></div>
<svg class="abs" style="left:1018.5px;top:595.5px" width="5" height="8" viewBox="0 0 5 8"><path d="M4.2 .5L.8 4l3.4 3.5" stroke="#4b5563" stroke-width="1.1" fill="none"/></svg>
<div class="abs" style="left:1036.1px;top:588.6px;width:21.7px;height:21.7px;border:1px solid #d6e4f7;border-radius:2.5px;background:#fff"></div>
<svg class="abs" style="left:1044.5px;top:595.5px" width="5" height="8" viewBox="0 0 5 8"><path d="M.8 .5L4.2 4 .8 7.5" stroke="#3d86f0" stroke-width="1.1" fill="none"/></svg>
<div class="t" style="left:243px;top:638.7px;font-weight:bold;color:#33373e">生产工单状态</div>
<div class="btn" style="left:245.5px;top:658.4000000000001px;width:47.5px">已派...</div>
<div class="btn" style="left:299.3px;top:658.4000000000001px;width:47.5px">待派...</div>
<div class="btn" style="left:353.3px;top:658.4000000000001px;width:47.5px">已完...</div>
<div class="t" style="left:426px;top:638.7px;color:#40444c">生产工单名称</div>
<div class="t blue" style="left:509.8px;top:638.7px">等于任意一个</div>
<svg class="abs" style="left:574.8px;top:642.7px" width="7.5" height="4.5" viewBox="0 0 8 5"><path d="M0 0h8L4 4.6z" fill="#3d86f0"/></svg>
<div class="sel" style="left:426px;top:658.9000000000001px;width:161.6px"></div>
<svg class="abs" style="left:571.6px;top:667.7px" width="8" height="5" viewBox="0 0 8 5"><path d="M0.6 0.7L4 4.1l3.4-3.4" stroke="#3d86f0" stroke-width="1.25" fill="none"/></svg>
<div class="t" style="left:609px;top:638.7px;color:#40444c">生产班组</div>
<div class="t blue" style="left:692.6px;top:638.7px">等于任意一个</div>
<svg class="abs" style="left:757.6px;top:642.7px" width="7.5" height="4.5" viewBox="0 0 8 5"><path d="M0 0h8L4 4.6z" fill="#3d86f0"/></svg>
<div class="sel" style="left:609px;top:658.9000000000001px;width:161.6px"></div>
<svg class="abs" style="left:754.6px;top:667.7px" width="8" height="5" viewBox="0 0 8 5"><path d="M0.6 0.7L4 4.1l3.4-3.4" stroke="#3d86f0" stroke-width="1.25" fill="none"/></svg>
<div class="t" style="left:792px;top:638.7px;color:#40444c">产品名称</div>
<div class="t blue" style="left:889.6px;top:638.7px">等于任意一个</div>
<svg class="abs" style="left:954.6px;top:642.7px" width="7.5" height="4.5" viewBox="0 0 8 5"><path d="M0 0h8L4 4.6z" fill="#3d86f0"/></svg>
<div class="sel" style="left:792px;top:658.9000000000001px;width:176.2px"></div>
<svg class="abs" style="left:952.2px;top:667.7px" width="8" height="5" viewBox="0 0 8 5"><path d="M0.6 0.7L4 4.1l3.4-3.4" stroke="#3d86f0" stroke-width="1.25" fill="none"/></svg>
<div class="t" style="left:243px;top:702px;color:#40444c">生产工单执行跟踪</div>
<div class="info" style="left:1053.5px;top:702.5px"></div>
<div class="abs" style="left:242.9px;top:722.7px;width:823px;height:60px;border:1px solid #d6e4f7;border-bottom:none;background:#ebf2fc"></div>
<div class="abs" style="left:243px;top:722.7px;width:823px;height:32.6px;background:#dde9f9"></div>
<div class="abs" style="left:243px;top:722.7px;width:92.49999999999999px;height:32.6px;background:#c6dbf6"></div>
<div class="t" style="left:251px;top:734.3px;color:#40444c;transform:scale(.94);transform-origin:0 50%">生产工单名称</div>
<svg class="abs" style="left:324.59999999999997px;top:735.8px" width="6" height="8.2" viewBox="0 0 6 8.2"><path d="M0.3 3.6L3 0.6l2.7 3z" fill="#2b2f36"/><path d="M0.3 4.6h5.4L3 7.6z" fill="#2b2f36"/></svg>
<div class="abs" style="left:336.9px;top:722.7px;width:81.4px;height:32.6px;background:#c6dbf6"></div>
<div class="t" style="left:344.2px;top:734.3px;color:#40444c;transform:scale(.94);transform-origin:0 50%">生产工单编号</div>
<svg class="abs" style="left:407.4px;top:735.8px" width="6" height="8.2" viewBox="0 0 6 8.2"><path d="M0.3 4.6h5.4L3 7.6z" fill="#2b2f36"/></svg>
<div class="abs" style="left:419.7px;top:722.7px;width:73.49999999999997px;height:32.6px;background:#c6dbf6"></div>
<div class="t" style="left:427px;top:734.3px;color:#40444c;transform:scale(.94);transform-origin:0 50%">工单状态</div>
<svg class="abs" style="left:482.29999999999995px;top:735.8px" width="6" height="8.2" viewBox="0 0 6 8.2"><path d="M0.3 3.6L3 0.6l2.7 3z" fill="#2b2f36"/><path d="M0.3 4.6h5.4L3 7.6z" fill="#2b2f36"/></svg>
<div class="abs" style="left:494.59999999999997px;top:722.7px;width:59.90000000000007px;height:32.6px;background:#c6dbf6"></div>
<div class="t" style="left:501.9px;top:734.3px;color:#40444c;transform:scale(.94);transform-origin:0 50%">生产班组</div>
<svg class="abs" style="left:543.6px;top:735.8px" width="6" height="8.2" viewBox="0 0 6 8.2"><path d="M0.3 3.6L3 0.6l2.7 3z" fill="#2b2f36"/></svg>
<div class="abs" style="left:555.9000000000001px;top:722.7px;width:77.39999999999995px;height:32.6px;background:#c6dbf6"></div>
<div class="t" style="left:563.2px;top:727.2px;color:#40444c;line-height:14.4px;transform:scale(.94);transform-origin:0 50%">工单开始日<br>期</div>
<svg class="abs" style="left:622.4px;top:735.8px" width="6" height="8.2" viewBox="0 0 6 8.2"><path d="M0.3 3.6L3 0.6l2.7 3z" fill="#2b2f36"/><path d="M0.3 4.6h5.4L3 7.6z" fill="#2b2f36"/></svg>
<div class="abs" style="left:634.7px;top:722.7px;width:76.30000000000004px;height:32.6px;background:#c6dbf6"></div>
<div class="t" style="left:642px;top:727.2px;color:#40444c;line-height:14.4px;transform:scale(.94);transform-origin:0 50%">工单结束日<br>期</div>
<svg class="abs" style="left:700.1px;top:735.8px" width="6" height="8.2" viewBox="0 0 6 8.2"><path d="M0.3 3.6L3 0.6l2.7 3z" fill="#2b2f36"/><path d="M0.3 4.6h5.4L3 7.6z" fill="#2b2f36"/></svg>
<div class="abs" style="left:712.4000000000001px;top:722.7px;width:94.89999999999995px;height:32.6px;background:#c6dbf6"></div>
<div class="t" style="left:719.7px;top:734.3px;color:#40444c;transform:scale(.94);transform-origin:0 50%">生产计划名称</div>
<svg class="abs" style="left:796.4px;top:735.8px" width="6" height="8.2" viewBox="0 0 6 8.2"><path d="M0.3 3.6L3 0.6l2.7 3z" fill="#2b2f36"/><path d="M0.3 4.6h5.4L3 7.6z" fill="#2b2f36"/></svg>
<div class="abs" style="left:808.7px;top:722.7px;width:90.20000000000002px;height:32.6px;background:#c6dbf6"></div>
<div class="t" style="left:816px;top:734.3px;color:#40444c;transform:scale(.94);transform-origin:0 50%">销售订单名称</div>
<svg class="abs" style="left:888.0px;top:735.8px" width="6" height="8.2" viewBox="0 0 6 8.2"><path d="M0.3 3.6L3 0.6l2.7 3z" fill="#2b2f36"/><path d="M0.3 4.6h5.4L3 7.6z" fill="#2b2f36"/></svg>
<div class="abs" style="left:900.3000000000001px;top:722.7px;width:57.49999999999998px;height:32.6px;background:#c6dbf6"></div>
<div class="t" style="left:907.6px;top:727.2px;color:#40444c;line-height:14.4px;transform:scale(.94);transform-origin:0 50%">产品名<br>称</div>
<svg class="abs" style="left:946.9px;top:735.8px" width="6" height="8.2" viewBox="0 0 6 8.2"><path d="M0.3 3.6L3 0.6l2.7 3z" fill="#2b2f36"/><path d="M0.3 4.6h5.4L3 7.6z" fill="#2b2f36"/></svg>
<div class="abs" style="left:959.2px;top:722.7px;width:61.1px;height:32.6px;background:#c6dbf6"></div>
<div class="t" style="left:966.5px;top:734.3px;color:#40444c;transform:scale(.94);transform-origin:0 50%">产品编码</div>
<svg class="abs" style="left:1009.4px;top:735.8px" width="6" height="8.2" viewBox="0 0 6 8.2"><path d="M0.3 3.6L3 0.6l2.7 3z" fill="#2b2f36"/></svg>
<div class="abs" style="left:1021.7px;top:722.7px;width:57.6px;height:32.6px;background:#c6dbf6"></div>
<div class="t" style="left:1029px;top:734.3px;color:#40444c;transform:scale(.94);transform-origin:0 50%">产品属性</div>
<div class="abs" style="left:1059.6px;top:722.7px;width:6px;height:40px;background:#fff;border-left:1px solid #d6e4f7"></div>
<div class="abs" style="left:1065.2px;top:722.7px;width:1px;height:40px;background:#d6e4f7"></div>
<div class="abs" style="left:1066.2px;top:700px;width:14px;height:59px;background:#fff"></div>
<div class="abs" style="left:1073.2px;top:82px;width:7px;height:677px;background:#f8f9fb"></div>
<div class="abs" style="left:335.7px;top:755.3000000000001px;width:1px;height:10px;background:#d8e5f8"></div>
<div class="abs" style="left:418.5px;top:755.3000000000001px;width:1px;height:10px;background:#d8e5f8"></div>
<div class="abs" style="left:493.4px;top:755.3000000000001px;width:1px;height:10px;background:#d8e5f8"></div>
<div class="abs" style="left:554.7px;top:755.3000000000001px;width:1px;height:10px;background:#d8e5f8"></div>
<div class="abs" style="left:633.5px;top:755.3000000000001px;width:1px;height:10px;background:#d8e5f8"></div>
<div class="abs" style="left:711.2px;top:755.3000000000001px;width:1px;height:10px;background:#d8e5f8"></div>
<div class="abs" style="left:807.5px;top:755.3000000000001px;width:1px;height:10px;background:#d8e5f8"></div>
<div class="abs" style="left:899.1px;top:755.3000000000001px;width:1px;height:10px;background:#d8e5f8"></div>
<div class="abs" style="left:958.0px;top:755.3000000000001px;width:1px;height:10px;background:#d8e5f8"></div>
<div class="abs" style="left:1020.5px;top:755.3000000000001px;width:1px;height:10px;background:#d8e5f8"></div>
</body></html>
